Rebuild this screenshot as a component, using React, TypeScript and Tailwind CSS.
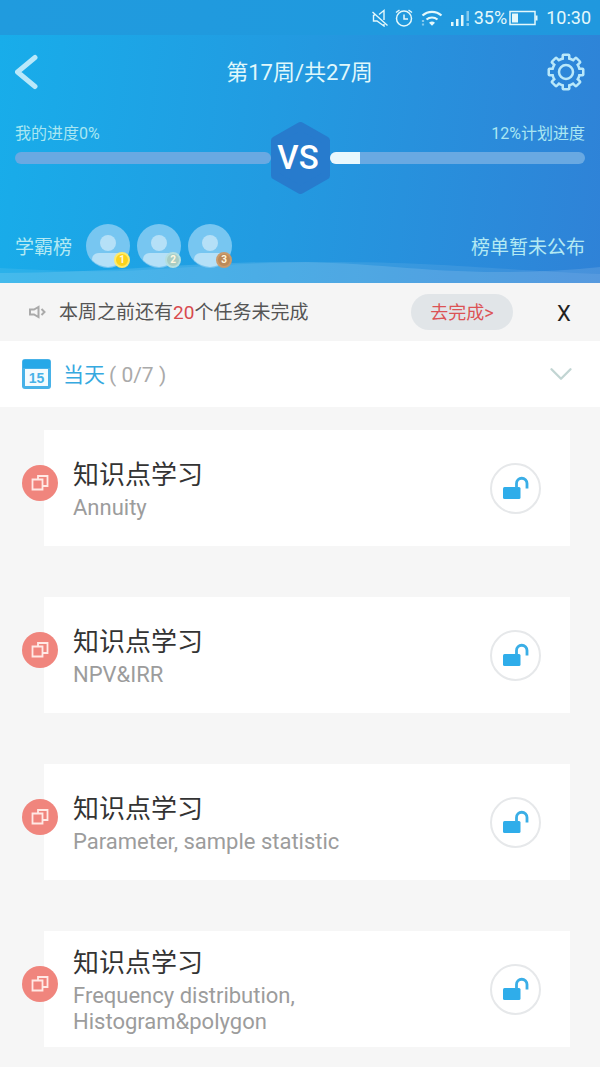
import { ChevronDown } from "lucide-react";

const tasks = [
  { title: "知识点学习", topic: "Annuity" },
  { title: "知识点学习", topic: "NPV&IRR" },
  { title: "知识点学习", topic: "Parameter, sample statistic" },
  { title: "知识点学习", topic: "Frequency distribution, Histogram&polygon" }
];

const ranks = [
  { place: 1, badge: "bg-[#fbd31c] border-[#fdea6c]" },
  { place: 2, badge: "bg-[#a9cdc4] border-[#b5dfe0]" },
  { place: 3, badge: "bg-[#bd8a58] border-[#c99a6c]" }
];

export default function App() {
  return (
    <div className="flex min-h-screen flex-col bg-[#f6f6f6] font-['Roboto','Noto_Sans_CJK_SC',sans-serif]">
      <StatusBar />
      <Header />
      <Notice />
      <TodayBar />
      <main>
        <ul className="flex flex-col gap-[51px] pt-[23px] pr-[30px] pb-5 pl-11">
          {tasks.map((task) => (
            <TaskCard key={task.topic} title={task.title} topic={task.topic} />
          ))}
        </ul>
      </main>
    </div>
  );
}

function StatusBar() {
  return (
    <div className="flex h-[35px] items-center justify-end bg-linear-to-r from-[#209bde] to-[#2098de] pr-[9px] text-lg text-[#e4f8fb]">
      <svg aria-hidden="true" className="mr-1.5 h-[18px] w-[18px]" fill="none" stroke="currentColor" strokeWidth="1.4" viewBox="0 0 18 18">
        <path d="M1.500 3l15 13.500M8 5.500l5-4V11M2.500 6v6H6l7 5v-2M2.500 6H4" />
      </svg>
      <svg aria-hidden="true" className="mr-2 h-[18px] w-[18px]" fill="none" stroke="currentColor" strokeWidth="1.5" viewBox="0 0 18 18">
        <circle cx="9" cy="9.500" r="7.500" />
        <path d="M9 5.500V10h4M1 3.500L4.500 1M17 3.500L13.500 1" />
      </svg>
      <svg aria-hidden="true" className="mr-2 h-[18px] w-[22px]" fill="none" stroke="currentColor" strokeWidth="2.2" viewBox="0 0 22 18">
        <path d="M1.500 6.500a14 14 0 0 1 19 0" />
        <path d="M5.500 10.500a8.500 8.500 0 0 1 11 0" />
        <path d="M8 13.700a5 5 0 0 1 6 0l-3 3z" fill="currentColor" stroke="none" />
        <path d="M2 11v2M2 14.500v2" opacity=".5" />
      </svg>
      <svg aria-hidden="true" className="mr-1 h-[18px] w-[19px]" fill="currentColor" viewBox="0 0 19 18">
        <path d="M0 13h2.500v4H0zM5 10h2.500v7H5zM10 6h2.500v11h-2.500z" />
        <path d="M15.500 2h2.500v10h-2.500zM15.500 14h2.500v3h-2.500z" opacity=".5" />
      </svg>
      <span>35%</span>
      <svg aria-hidden="true" className="mr-2 ml-0.5 h-4 w-[29px]" fill="none" stroke="currentColor" strokeWidth="1.500" viewBox="0 0 29 16">
        <rect height="13" width="25" x="1" y="1.500" />
        <path d="M3 3.500h6v9H3z" fill="currentColor" stroke="none" />
        <path d="M27.500 5.500v5" strokeWidth="2" />
      </svg>
      <span>10:30</span>
    </div>
  );
}

function Header() {
  return (
    <header className="relative bg-linear-[97deg] from-[#18adea] via-[#2399e0] to-[#2f82d7] px-[15px] pb-[15px]">
      <svg aria-hidden="true" className="absolute inset-x-0 bottom-0 h-[22px] w-full" fill="#fff" preserveAspectRatio="none" viewBox="0 0 600 22">
        <path d="M0 7C40 9 80 11 120 10C190 7 240 1 330 1C440 1 500 9 600 13V22H0z" opacity=".08" />
        <path d="M0 12C120 12 180 1 290 1C370 1 420 11 500 11C540 11 570 9 600 6V22H0z" opacity=".12" />
      </svg>
      <div className="flex h-[73px] items-center justify-between text-[#b9e8fa]">
        <button aria-label="返回" type="button">
          <svg className="h-9 w-6" fill="none" stroke="currentColor" strokeLinecap="round" strokeLinejoin="round" strokeWidth="5" viewBox="0 0 24 36">
            <path d="M20 3.500L2.500 18L20 32.500" />
          </svg>
        </button>
        <h1 className="pt-0.5 pl-[13px] text-[22px] text-[#e0f8fb]">第17周/共27周</h1>
        <button aria-label="设置" type="button">
          <Gear />
        </button>
      </div>
      <div className="flex items-center pt-[14px]">
        <Progress label="我的进度0%" value={0} />
        <div className="relative flex h-[72px] w-[59px] shrink-0 items-center justify-center">
          <svg aria-hidden="true" className="absolute inset-0 h-full w-full" fill="#277bcd" stroke="#277bcd" strokeLinejoin="round" strokeWidth="8" viewBox="0 0 59 72">
            <path d="M29.500 4L55 18.500v35L29.500 68L4 53.500v-35z" />
          </svg>
          <span className="relative pr-1 text-[33px] font-medium text-white">VS</span>
        </div>
        <Progress alignEnd label="12%计划进度" value={12} />
      </div>
      <div className="relative flex items-center justify-between pt-[30px] text-[19px] text-[#b3e9f3]">
        <div className="flex items-center gap-[14px]">
          <span className="pt-1">学霸榜</span>
          <div className="flex gap-[7px]">
            {ranks.map((rank) => (
              <div className="relative h-11 w-11" key={rank.place}>
                <svg aria-hidden="true" className="h-11 w-11" viewBox="0 0 44 44">
                  <circle cx="22" cy="22" fill="#77c6f1" r="22" />
                  <circle cx="22" cy="19" fill="#b5e0f7" r="8" />
                  <path d="M6 36c0-5 3-7 7-7h18c4 0 7 2 7 7a22 22 0 0 1-32 0z" fill="#b5e0f7" />
                </svg>
                <span className={`absolute right-0 bottom-0 flex h-4 w-4 items-center justify-center rounded-full border-2 text-[10px] leading-none font-bold text-[#fff8e0] ${rank.badge}`}>
                  {rank.place}
                </span>
              </div>
            ))}
          </div>
        </div>
        <span className="pt-1">榜单暂未公布</span>
      </div>
    </header>
  );
}

function Progress({ label, value, alignEnd = false }: { label: string; value: number; alignEnd?: boolean }) {
  return (
    <div className={`flex flex-1 flex-col gap-2 pb-7 text-[#a9e6f2] ${alignEnd ? "text-right" : ""}`}>
      <span className="text-base leading-5">{label}</span>
      <div aria-label={label} aria-valuenow={value} className="h-3 overflow-hidden rounded-full bg-[#69a9e2]" role="progressbar">
        <div className="h-full bg-[#e8f8fd]" style={{ width: `${value}%` }} />
      </div>
    </div>
  );
}

function Gear() {
  const teeth = [0, 45, 90, 135, 180, 225, 270, 315];
  return (
    <svg className="h-[38px] w-[38px]" fill="none" viewBox="0 0 38 38">
      <mask id="gear-rim">
        <g fill="#fff">
          <circle cx="19" cy="19" r="15" />
          {teeth.map((angle) => (
            <rect height="8" key={angle} rx="2" transform={`rotate(${angle} 19 19)`} width="9" x="14.500" y=".5" />
          ))}
        </g>
        <g fill="#000">
          <circle cx="19" cy="19" r="12.500" />
          {teeth.map((angle) => (
            <rect height="8" key={angle} transform={`rotate(${angle} 19 19)`} width="4" x="17" y="3" />
          ))}
        </g>
      </mask>
      <path d="M0 0h38v38H0z" fill="currentColor" mask="url(#gear-rim)" />
      <circle cx="19" cy="19" r="7" stroke="currentColor" strokeWidth="2.500" />
    </svg>
  );
}

function Notice() {
  return (
    <section className="flex h-[58px] items-center bg-[#f5f5f5] px-7">
      <svg aria-hidden="true" className="mr-3 h-[14px] w-[19px]" fill="none" stroke="#aaa" strokeWidth="2" viewBox="0 0 19 14">
        <path d="M2 4.500h4l4.500-2.500v10L6 9.500H2z" />
        <path d="M13.500 4l3 3l-3 3" />
      </svg>
      <p className="pt-0.5 text-[19px] text-[#555]">
        本周之前还有<span className="text-[#d84a4e]">20</span>个任务未完成
      </p>
      <button className="mr-[43px] ml-auto h-9 w-[102px] rounded-full bg-[#e1e5e8] pt-0.5 text-lg text-[#dc5355]" type="button">
        去完成&gt;
      </button>
      <button aria-label="关闭" className="w-4 pt-0.5 text-[22px] text-[#222]" type="button">
        X
      </button>
    </section>
  );
}

function TodayBar() {
  return (
    <button aria-expanded="true" className="flex h-[66px] items-center bg-white pr-5 pl-[22px] text-left text-[21px]" type="button">
      <svg aria-hidden="true" className="mr-3 h-[30px] w-[29px]" viewBox="0 0 29 30">
        <rect fill="#48b2e8" height="30" rx="3" width="29" />
        <path d="M1 1h27v8H1z" fill="#27a8e8" />
        <path d="M3 10h23v17H3z" fill="#f4fbfe" />
        <text fill="#48b2e8" fontFamily="Liberation Sans, sans-serif" fontSize="14" fontWeight="700" textAnchor="middle" x="14.500" y="24">
          15
        </text>
      </svg>
      <span className="pt-1 text-[#36a9df]">当天</span>
      <span className="ml-1 pt-1 text-[#aaa]">( 0/7 )</span>
      <ChevronDown aria-hidden="true" className="ml-auto text-[#c2d5d3]" size={38} strokeWidth={1.5} />
    </button>
  );
}

function TaskCard({ title, topic }: { title: string; topic: string }) {
  return (
    <li className="relative flex min-h-[116px] items-center justify-between bg-white px-[29px]">
      <span className="absolute top-[35px] -left-[22px] flex h-9 w-9 items-center justify-center rounded-full bg-[#f0857d]">
        <svg aria-hidden="true" className="h-[18px] w-[18px]" fill="none" stroke="#ffe9e5" strokeWidth="1.800" viewBox="0 0 18 18">
          <path d="M1.500 5.500h10v10h-10z" />
          <path d="M7 5.500V2h9.500v10H11.500" />
        </svg>
      </span>
      <div className="max-w-[280px]">
        <h2 className="text-[26px] leading-10 text-[#333]">{title}</h2>
        <p className="text-[22px] leading-[26px] text-[#9c9c9c]">{topic}</p>
      </div>
      <button aria-label={`解锁 ${topic}`} className="flex h-[51px] w-[51px] shrink-0 items-center justify-center rounded-full border-2 border-[#e6e8ea]" type="button">
        <svg aria-hidden="true" className="h-6 w-[26px]" viewBox="0 0 26 24">
          <rect fill="#2fadea" height="12" rx="1.500" width="17.500" x="0" y="11" />
          <path d="M13.500 12V7.500a5.200 5.200 0 0 1 10.500 0v5" fill="none" stroke="#3aaee6" strokeWidth="2.800" />
        </svg>
      </button>
    </li>
  );
}
